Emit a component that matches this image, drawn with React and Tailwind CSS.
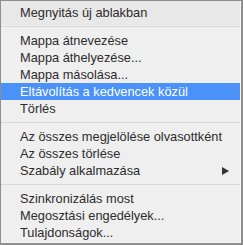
import React from "react";

const groups = [
  ["Megnyitás új ablakban"],
  [
    "Mappa átnevezése",
    "Mappa áthelyezése...",
    "Mappa másolása...",
    "Eltávolítás a kedvencek közül",
    "Törlés",
  ],
  ["Az összes megjelölése olvasottként", "Az összes törlése", "Szabály alkalmazása"],
  ["Szinkronizálás most", "Megosztási engedélyek...", "Tulajdonságok..."],
];

function Row({ label }) {
  const active = label === "Eltávolítás a kedvencek közül";
  const submenu = label === "Szabály alkalmazása";
  return (
    <div
      className={`flex h-[17px] items-center justify-between pl-[19px] pr-[11px] leading-[17px] ${
        active ? "bg-[#4a91fa] text-white" : "text-[#2c2c2c]"
      }`}
    >
      <span className="whitespace-nowrap">{label}</span>
      {submenu && (
        <svg width="7" height="8" viewBox="0 0 7 8" className="text-[#333]">
          <path d="M0 0L7 4L0 8Z" fill="currentColor" />
        </svg>
      )}
    </div>
  );
}

export default function App() {
  return (
    <div
      className="h-[245px] w-[243px] overflow-hidden border-l border-t border-r-2 border-b-2 border-[#8e8e8e] bg-[#efefef] text-[12.8px]"
      style={{ fontFamily: '"Liberation Sans", Arial, sans-serif' }}
    >
      <div className="h-full border-b border-r border-[#f8f8f8]">
        {groups.map((items, gi) => (
          <div key={gi}>
            {gi > 0 && <div className="my-[5px] h-px bg-[#d8d8d8]" />}
            <div className={gi === 0 ? "bg-[#e8e8e8] pt-[3px] pb-[4px] -mb-[4px]" : ""}>
              {items.map((label) => (
                <Row key={label} label={label} />
              ))}
            </div>
          </div>
        ))}
      </div>
    </div>
  );
}
